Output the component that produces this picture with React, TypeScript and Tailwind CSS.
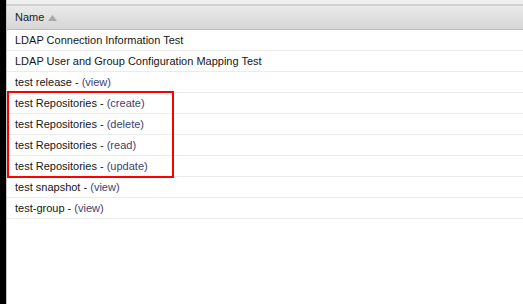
import React from "react";

const rows: { name: string; action?: string }[] = [
  { name: "LDAP Connection Information Test" },
  { name: "LDAP User and Group Configuration Mapping Test" },
  { name: "test release - ", action: "(view)" },
  { name: "test Repositories - ", action: "(create)" },
  { name: "test Repositories - ", action: "(delete)" },
  { name: "test Repositories - ", action: "(read)" },
  { name: "test Repositories - ", action: "(update)" },
  { name: "test snapshot - ", action: "(view)" },
  { name: "test-group - ", action: "(view)" },
];

function Row({ name, action }: { name: string; action?: string }) {
  return (
    <div className="h-[21px] border-b border-[#ebebeb] pl-[8px] leading-[20px] whitespace-pre">
      <span className="text-[#161616]">{name}</span>
      {action && <span className="text-[#3b4270]">{action}</span>}
    </div>
  );
}

export default function App() {
  return (
    <div
      className="w-[523px] h-[304px] flex bg-white text-[11px] overflow-hidden"
      style={{ fontFamily: '"Liberation Sans", Arial, sans-serif' }}
    >
      {/* left dark frame */}
      <div className="w-[6px] bg-black shrink-0" />
      <div className="w-[1px] bg-[#c8c8c8] shrink-0" />

      <div className="flex-1 flex flex-col">
        {/* toolbar strip */}
        <div className="h-[4px] bg-[#efefef]" />
        <div className="h-[2px] bg-[#d0d0d0]" />

        {/* grid header */}
        <div className="h-[24px] bg-gradient-to-b from-[#eaeaea] to-[#d6d6d6] border-b border-[#bcbcbc] flex items-center pl-[8px]">
          <span className="text-[#222]">Name</span>
          <svg width="9" height="6" viewBox="0 0 9 6" className="ml-[4px] mt-[1px]">
            <polygon points="0,6 4.5,0 9,6" fill="#a8a8a8" />
          </svg>
        </div>

        {/* rows */}
        <div className="flex flex-col">
          {rows.slice(0, 3).map((r, i) => (
            <Row key={i} {...r} />
          ))}
          <div className="relative">
            {rows.slice(3, 7).map((r, i) => (
              <Row key={i} {...r} />
            ))}
            <div className="absolute left-0 top-[-2px] w-[167px] h-[87px] border-2 border-[#ff0000] pointer-events-none" />
          </div>
          {rows.slice(7).map((r, i) => (
            <Row key={i} {...r} />
          ))}
        </div>
      </div>
    </div>
  );
}
